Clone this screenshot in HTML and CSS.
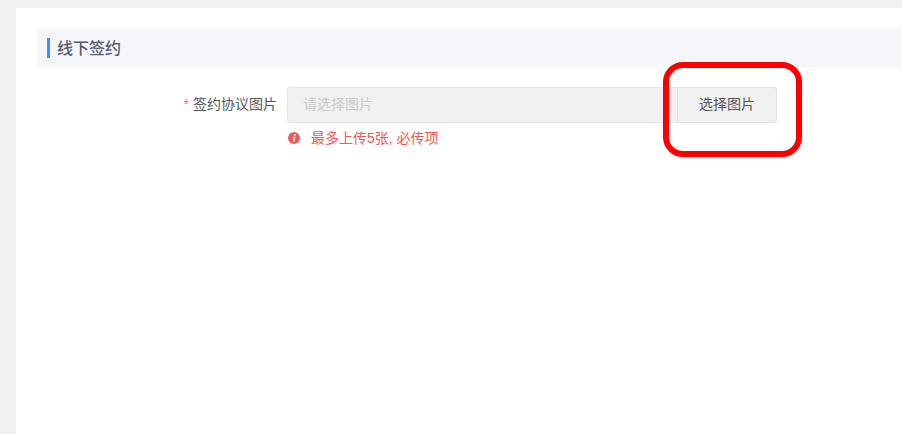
FILE: index.html
```html
<!DOCTYPE html>
<html lang="zh-CN">
<head>
    <meta charset="UTF-8">
    <title>线下签约</title>
    <link rel="stylesheet" href="styles.css">
</head>
<body>
    <div class="page">
        <div class="section-title"><span class="section-bar"></span><span class="section-text">线下签约</span></div>

        <div class="form-row">
            <label class="form-label"><span class="required">*</span>签约协议图片</label>
            <div class="form-field">
                <div class="input-group">
                    <div class="input-fake">请选择图片</div>
                    <div class="input-btn">选择图片</div>
                </div>
                <div class="form-error">
                    <svg class="error-icon" viewBox="0 0 12 12" width="12" height="12">
                        <circle cx="6" cy="6" r="6" fill="#ec5a5a"/>
                        <path d="M6.2 2.2h1.7l-.3 1.6H5.9zM5.6 4.7h1.7l-.8 5H4.8z" fill="#fff"/>
                    </svg>
                    <span>最多上传5张, 必传项</span>
                </div>
            </div>
        </div>

        <div class="highlight"></div>
    </div>
</body>
</html>
```

FILE: styles.css
```css
* {
    box-sizing: border-box;
}

html,
body {
    margin: 0;
    height: 100%;
    overflow: hidden;
}

body {
    background-color: #f1f1f1;
    padding: 8px 0 0 16px;
    font-family: "Liberation Sans", "Noto Sans CJK SC", sans-serif;
    color: #555;
}

.page {
    position: relative;
    height: 100%;
    background: #fff;
    padding: 21px 0 0 21px;
}

.section-title {
    display: flex;
    align-items: center;
    height: 38px;
    background-color: #f5f6fa;
    padding-left: 10px;
    font-size: 16px;
    font-weight: 500;
    color: #555b6e;
}

.section-bar {
    width: 3px;
    height: 20px;
    margin-right: 7px;
    background-color: #3f8ff5;
}

.section-text {
    margin-bottom: 2px;
}

.form-row {
    display: flex;
    margin-top: 20px;
}

.form-label {
    width: 250px;
    height: 36px;
    padding-right: 10px;
    line-height: 34px;
    text-align: right;
    font-size: 14px;
    color: #555;
}

.required {
    margin-right: 4px;
    color: #f56c6c;
}

.input-group {
    display: flex;
    width: 490px;
    height: 36px;
}

.input-fake {
    flex: 1;
    padding-left: 15px;
    line-height: 32px;
    font-size: 14px;
    color: #c8c9cc;
    background-color: #f1f1f1;
    border: 1px solid #e4e5e8;
    border-right: none;
    border-radius: 3px 0 0 3px;
}

.input-btn {
    width: 100px;
    line-height: 32px;
    text-align: center;
    font-size: 14px;
    color: #555;
    background-color: #f1f1f2;
    border: 1px solid #e0e1e5;
    border-radius: 0 3px 3px 0;
}

.form-error {
    display: flex;
    align-items: center;
    gap: 11px;
    margin-top: 6px;
    padding-left: 1px;
    font-size: 14px;
    line-height: 18px;
    color: #ec5a5a;
}

.highlight {
    position: absolute;
    left: 647px;
    top: 54px;
    width: 139px;
    height: 95px;
    border: 6px solid #ff0000;
    border-radius: 20px;
}
```
